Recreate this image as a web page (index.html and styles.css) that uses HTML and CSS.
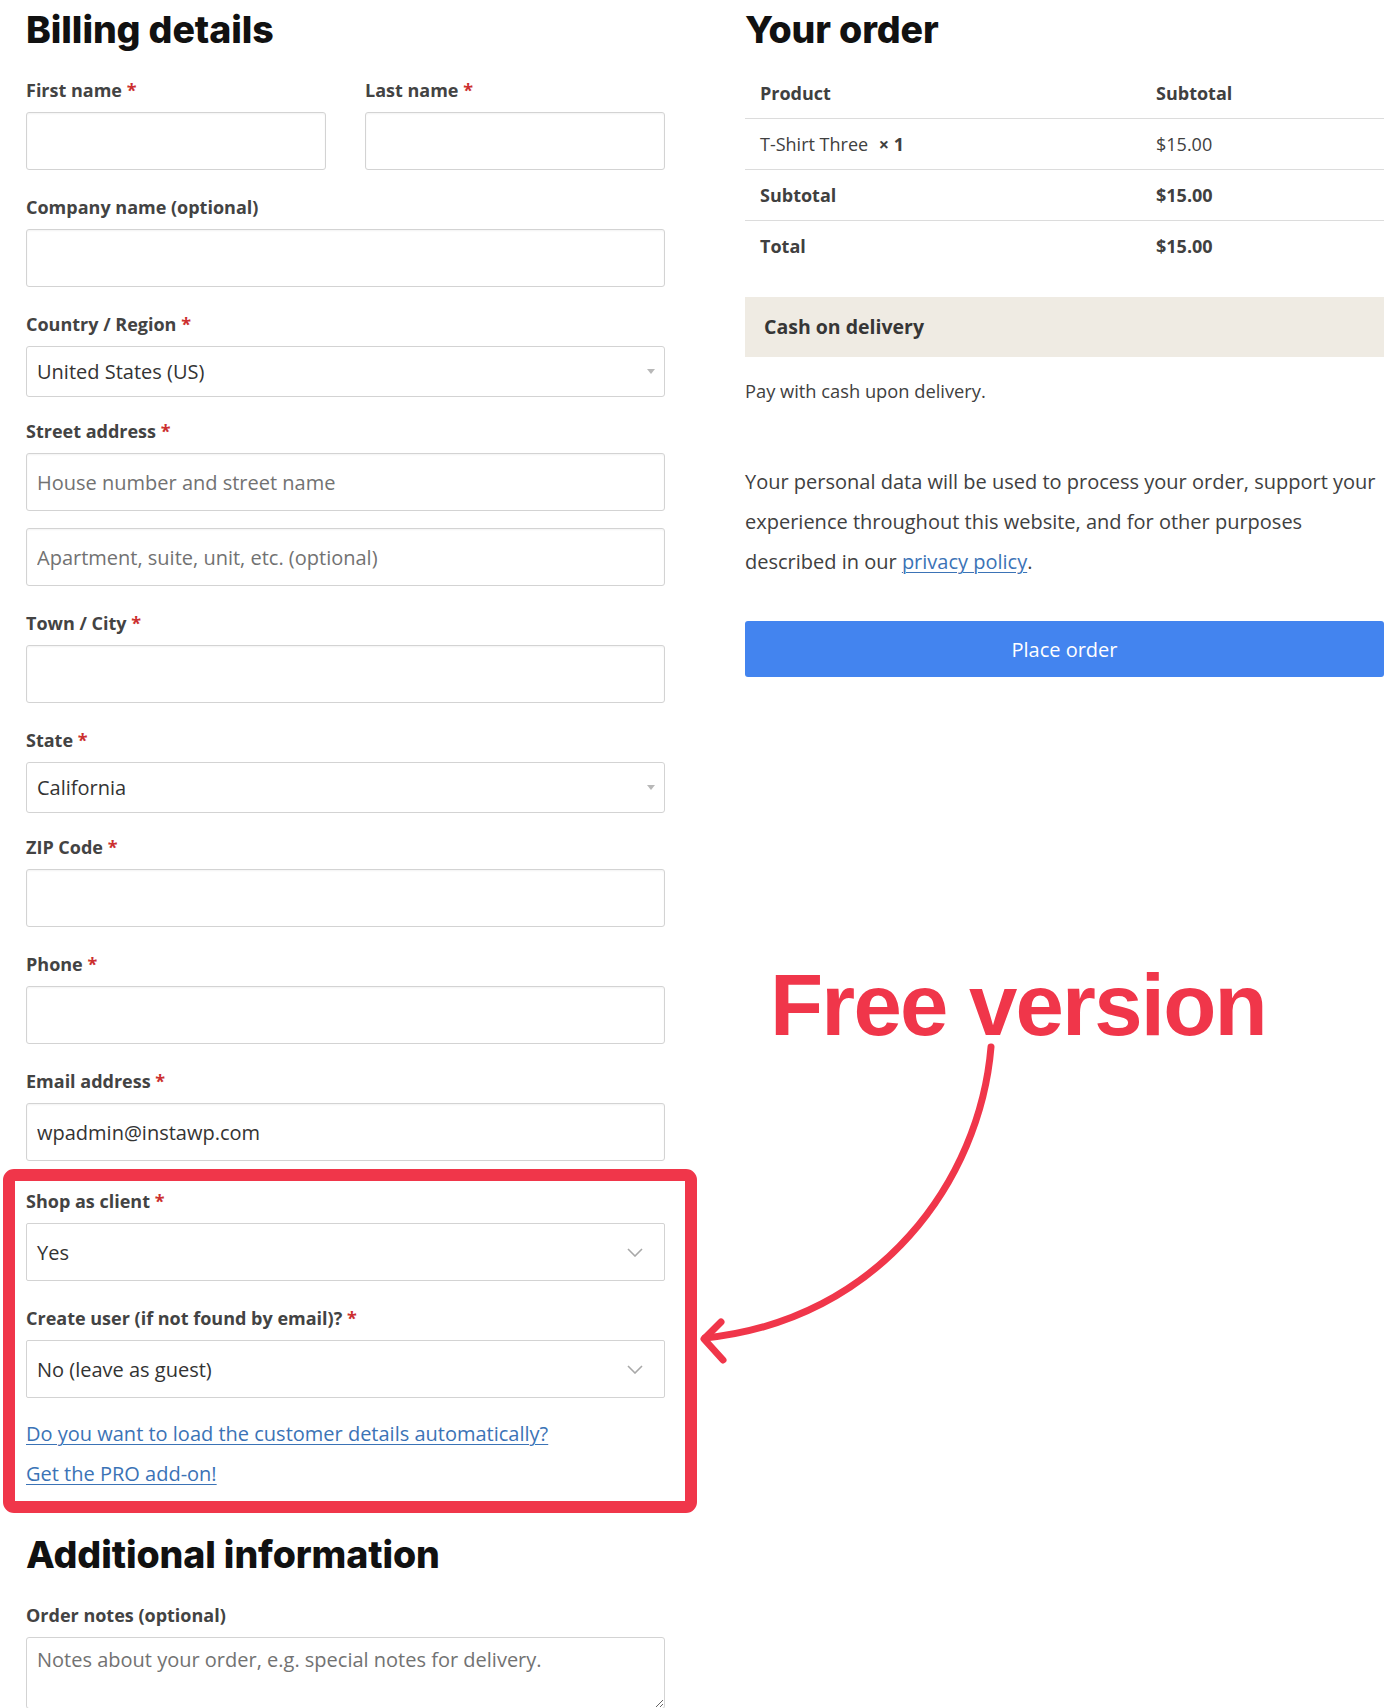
FILE: index.html
```html
<!DOCTYPE html>
<html lang="en">
<head>
<meta charset="utf-8">
<title>Checkout</title>
<link rel="stylesheet" href="styles.css">
</head>
<body>
<div class="page">
  <section class="col billing">
    <h3 class="title">Billing details</h3>
    <div class="pair">
      <div class="field">
        <label class="lbl">First name <span class="req">*</span></label>
        <input class="txt" type="text">
      </div>
      <div class="field">
        <label class="lbl">Last name <span class="req">*</span></label>
        <input class="txt" type="text">
      </div>
    </div>
    <div class="field">
      <label class="lbl">Company name (optional)</label>
      <input class="txt" type="text">
    </div>
    <div class="field field-select">
      <label class="lbl">Country / Region <span class="req">*</span></label>
      <div class="sel2"><span class="sel-val">United States (US)</span><span class="tri"></span></div>
    </div>
    <div class="field">
      <label class="lbl">Street address <span class="req">*</span></label>
      <input class="txt" type="text" placeholder="House number and street name">
      <input class="txt txt-next" type="text" placeholder="Apartment, suite, unit, etc. (optional)">
    </div>
    <div class="field">
      <label class="lbl">Town / City <span class="req">*</span></label>
      <input class="txt" type="text">
    </div>
    <div class="field field-select">
      <label class="lbl">State <span class="req">*</span></label>
      <div class="sel2"><span class="sel-val">California</span><span class="tri"></span></div>
    </div>
    <div class="field">
      <label class="lbl">ZIP Code <span class="req">*</span></label>
      <input class="txt" type="text">
    </div>
    <div class="field">
      <label class="lbl">Phone <span class="req">*</span></label>
      <input class="txt" type="text">
    </div>
    <div class="field">
      <label class="lbl">Email address <span class="req">*</span></label>
      <input class="txt" type="email" value="wpadmin@instawp.com">
    </div>
    <div class="client-group">
      <div class="field">
        <label class="lbl">Shop as client <span class="req">*</span></label>
        <div class="sel"><span class="sel-val">Yes</span>
          <svg class="chev" width="16" height="9" viewBox="0 0 16 9"><path d="M1 1 L8 8 L15 1" fill="none" stroke="#a8a8a8" stroke-width="1.6"/></svg>
        </div>
      </div>
      <div class="field field-last">
        <label class="lbl">Create user (if not found by email)? <span class="req">*</span></label>
        <div class="sel"><span class="sel-val">No (leave as guest)</span>
          <svg class="chev" width="16" height="9" viewBox="0 0 16 9"><path d="M1 1 L8 8 L15 1" fill="none" stroke="#a8a8a8" stroke-width="1.6"/></svg>
        </div>
      </div>
      <p class="links">
        <a href="#">Do you want to load the customer details automatically?</a><br>
        <a href="#">Get the PRO add-on!</a>
      </p>
    </div>
    <h3 class="title">Additional information</h3>
    <div class="field">
      <label class="lbl">Order notes (optional)</label>
      <textarea class="notes" placeholder="Notes about your order, e.g. special notes for delivery."></textarea>
    </div>
  </section>

  <section class="col order">
    <h3 class="title title-order">Your order</h3>
    <div class="otable">
      <div class="orow ohead"><span>Product</span><span>Subtotal</span></div>
      <div class="orow"><span>T-Shirt Three <strong class="qty">× 1</strong></span><span>$15.00</span></div>
      <div class="orow obold"><span>Subtotal</span><span>$15.00</span></div>
      <div class="orow obold olast"><span>Total</span><span>$15.00</span></div>
    </div>
    <div class="pay-box">Cash on delivery</div>
    <p class="pay-desc">Pay with cash upon delivery.</p>
    <p class="privacy">Your personal data will be used to process your order, support your<br>experience throughout this website, and for other purposes<br>described in our <a href="#">privacy policy</a>.</p>
    <button class="place" type="button">Place order</button>
  </section>

  <svg class="annot" width="1400" height="1708" viewBox="0 0 1400 1708">
    <rect x="9" y="1175" width="682" height="332" rx="5" ry="5" fill="none" stroke="#f0364a" stroke-width="12"/>
    <text class="annot-text" x="770" y="1035">Free version</text>
    <path d="M991 1047 C980 1180 880 1320 705 1338" fill="none" stroke="#f0364a" stroke-width="7" stroke-linecap="round"/>
    <path d="M721 1322 L704 1339 L723 1360" fill="none" stroke="#f0364a" stroke-width="7" stroke-linecap="round" stroke-linejoin="round"/>
  </svg>
</div>
</body>
</html>
```

FILE: styles.css
```css
html, body {
  margin: 0;
  padding: 0;
  background: #ffffff;
  overflow: hidden;
}

body {
  font-family: "Open Sans", "Liberation Sans", sans-serif;
  color: #404040;
}

.page {
  position: relative;
  width: 1400px;
  height: 1708px;
  box-sizing: border-box;
  padding: 7px 0 0 26px;
  display: grid;
  grid-template-columns: 639px 639px;
  column-gap: 80px;
  align-items: start;
}

.col {
  display: flex;
  flex-direction: column;
}

.title {
  margin: 0 0 24px;
  font-family: Inter, "Liberation Sans", sans-serif;
  font-weight: 800;
  font-size: 37.5px;
  line-height: 46px;
  color: #111111;
  letter-spacing: -0.1px;
}

.title-order {
  margin-bottom: 15px;
}

.pair {
  display: grid;
  grid-template-columns: 1fr 1fr;
  column-gap: 39px;
}

.field {
  display: flex;
  flex-direction: column;
  margin-bottom: 24px;
}

.field-select {
  margin-bottom: 21px;
}

.field-last {
  margin-bottom: 16px;
}

.lbl {
  display: block;
  font-size: 18px;
  line-height: 27px;
  font-weight: 700;
  color: #434343;
  margin-bottom: 8px;
}

.req {
  color: #cc2f2f;
  font-weight: 700;
}

.txt {
  box-sizing: border-box;
  width: 100%;
  height: 58px;
  margin: 0;
  padding: 0 10px;
  border: 1px solid #d3d3d3;
  border-radius: 3px;
  background: #ffffff;
  box-shadow: inset 0 1px 2px rgba(0, 0, 0, 0.05);
  font-family: "Open Sans", "Liberation Sans", sans-serif;
  font-size: 20px;
  color: #333333;
  outline: none;
}

.txt::placeholder,
.notes::placeholder {
  color: #727272;
  opacity: 1;
}

.txt-next {
  margin-top: 17px;
}

.sel2,
.sel {
  box-sizing: border-box;
  width: 100%;
  display: flex;
  align-items: center;
  justify-content: space-between;
  border: 1px solid #d3d3d3;
  border-radius: 3px;
  background: #ffffff;
  font-size: 20px;
  color: #333333;
}

.sel2 {
  height: 51px;
  padding: 0 9px 0 10px;
}

.sel {
  height: 58px;
  padding: 0 21px 0 10px;
  border-radius: 2px;
}

.tri {
  width: 0;
  height: 0;
  border-left: 4px solid transparent;
  border-right: 4px solid transparent;
  border-top: 5px solid #b8b8b8;
}

.chev {
  display: block;
}

.client-group {
  padding-top: 3px;
}

.links {
  margin: 0 0 38px;
  font-size: 20px;
  line-height: 40px;
}

.links a,
.privacy a {
  color: #3b73b6;
  text-decoration: underline;
  text-underline-offset: 3px;
  text-decoration-thickness: 1px;
}

.notes {
  box-sizing: border-box;
  width: 100%;
  height: 72px;
  margin: 0;
  padding: 7px 10px;
  border: 1px solid #d3d3d3;
  border-radius: 3px;
  font-family: "Open Sans", "Liberation Sans", sans-serif;
  font-size: 20px;
  line-height: 30px;
  color: #333333;
  resize: vertical;
  outline: none;
}

/* Order column */
.otable {
  display: flex;
  flex-direction: column;
}

.orow {
  display: grid;
  grid-template-columns: 396px 1fr;
  padding: 12px 15px 11px;
  font-size: 18px;
  line-height: 27px;
  color: #404040;
  border-bottom: 1px solid #dcdcdc;
}

.ohead,
.obold {
  font-weight: 700;
}

.olast {
  border-bottom: none;
}

.qty {
  margin-left: 6px;
  font-weight: 700;
}

.pay-box {
  margin-top: 26px;
  padding: 16px 19px;
  background: #efebe3;
  font-size: 19.5px;
  line-height: 28px;
  font-weight: 700;
  color: #363636;
}

.pay-desc {
  margin: 20px 0 0;
  font-size: 18.3px;
  line-height: 27px;
  color: #404040;
}

.privacy {
  margin: 58px 0 0;
  font-size: 20px;
  line-height: 40px;
  color: #404040;
}

.place {
  margin-top: 39px;
  height: 56px;
  width: 100%;
  border: none;
  border-radius: 3px;
  background: #4384ef;
  color: #ffffff;
  font-family: "Open Sans", "Liberation Sans", sans-serif;
  font-size: 20px;
  cursor: pointer;
}

/* Annotation overlay */
.annot {
  position: absolute;
  left: 0;
  top: 0;
  pointer-events: none;
}

.annot-text {
  font-family: "Liberation Sans", Arial, sans-serif;
  font-weight: 700;
  font-size: 87px;
  letter-spacing: -1.8px;
  fill: #f0364a;
}
```
